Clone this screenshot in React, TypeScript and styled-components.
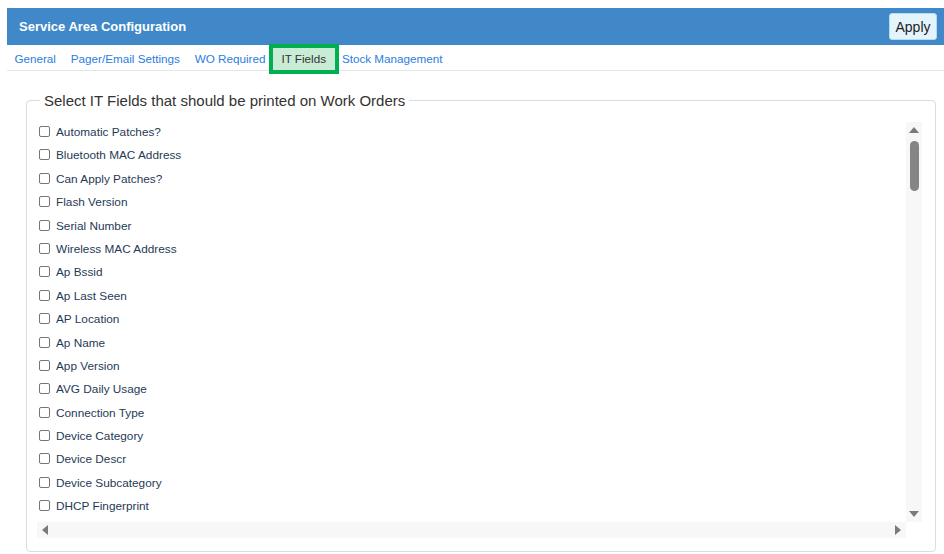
import React from "react";
import styled, { createGlobalStyle } from "styled-components";

const Global = createGlobalStyle`
  html, body { margin: 0; padding: 0; overflow: hidden; background: #fff; }
  body { font-family: "Liberation Sans", Arial, sans-serif; }
  * { box-sizing: border-box; }
`;

const Page = styled.div`
  padding: 8px 0 0 7px;
  width: 944px;
`;

const Header = styled.div`
  height: 37px;
  background: #4088c8;
  display: flex;
  align-items: center;
  justify-content: space-between;
  padding: 0 7px 0 12px;
`;

const Title = styled.div`
  color: #fff;
  font-weight: bold;
  font-size: 13px;
`;

const ApplyButton = styled.button`
  height: 27px;
  width: 48px;
  padding: 0;
  background: #e3f4fc;
  border: 1px solid #b6dbef;
  border-radius: 3px;
  font-family: "Liberation Sans", Arial, sans-serif;
  font-size: 14px;
  color: #222;
`;

const TabRow = styled.div`
  height: 26px;
  border-bottom: 1px solid #e4e6e9;
  display: flex;
  align-items: flex-start;
  padding-top: 3px;
`;

const Tab = styled.div<{ $active?: boolean }>`
  height: 22px;
  line-height: 22px;
  padding: 0 ${(p) => (p.$active ? "8.5px" : "7.4px")};
  font-size: 11.7px;
  color: ${(p) => (p.$active ? "#333" : "#2b7de1")};
  background: ${(p) => (p.$active ? "#c9ecd6" : "transparent")};
  outline: ${(p) => (p.$active ? "4px solid #00b050" : "none")};
  position: relative;
  z-index: ${(p) => (p.$active ? 1 : 0)};
`;

const Fieldset = styled.fieldset`
  margin: 21px 8px 0 19px;
  padding: 13px 13px 13px 10px;
  border: 1px solid #dcdcdc;
  border-radius: 4px;
  min-width: 0;
`;

const Legend = styled.legend`
  font-size: 15px;
  line-height: 17px;
  color: #333;
  padding: 0 4px;
  margin-left: 3px;
`;

const ScrollBox = styled.div`
  height: 416px;
  display: flex;
  flex-direction: column;
`;

const ScrollMain = styled.div`
  flex: 1;
  display: flex;
  min-height: 0;
`;

const List = styled.div`
  flex: 1;
  overflow: hidden;
`;

const Row = styled.label`
  height: 23.4px;
  display: flex;
  align-items: flex-start;
  gap: 6px;
  padding: 3px 0 0 2px;
  font-size: 11.8px;
  line-height: 14px;
  color: #1f3a56;
`;

const Check = styled.input.attrs({ type: "checkbox" })`
  appearance: none;
  -webkit-appearance: none;
  margin: 1px 0 0 0;
  width: 11px;
  height: 11px;
  border: 1px solid #767676;
  border-radius: 2px;
  background: #fff;
  flex: none;
`;

const VBar = styled.div`
  width: 16px;
  background: #f7f7f7;
  display: flex;
  flex-direction: column;
  align-items: center;
`;

const ArrowBtn = styled.div`
  width: 16px;
  height: 16px;
  display: flex;
  align-items: center;
  justify-content: center;
  flex: none;
`;

const VTrack = styled.div`
  flex: 1;
  width: 16px;
  padding: 3px 3px 0 4px;
`;

const Thumb = styled.div`
  width: 9px;
  height: 50px;
  border-radius: 5px;
  background: #858585;
`;

const HRow = styled.div`
  height: 16px;
  display: flex;
`;

const HBar = styled.div`
  flex: 1;
  background: #f7f7f7;
  display: flex;
  justify-content: space-between;
  align-items: center;
`;

const Corner = styled.div`
  width: 16px;
  background: #fff;
`;

const items = [
  "Automatic Patches?",
  "Bluetooth MAC Address",
  "Can Apply Patches?",
  "Flash Version",
  "Serial Number",
  "Wireless MAC Address",
  "Ap Bssid",
  "Ap Last Seen",
  "AP Location",
  "Ap Name",
  "App Version",
  "AVG Daily Usage",
  "Connection Type",
  "Device Category",
  "Device Descr",
  "Device Subcategory",
  "DHCP Fingerprint",
];

const Tri = ({ dir }: { dir: "up" | "down" | "left" | "right" }) => {
  const pts: Record<string, string> = {
    up: "0,7 5,1 10,7",
    down: "0,1 10,1 5,7",
    left: "7,0 7,10 1,5",
    right: "1,0 1,10 7,5",
  };
  const vertical = dir === "up" || dir === "down";
  return (
    <svg width={vertical ? 10 : 8} height={vertical ? 8 : 10} viewBox={vertical ? "0 0 10 8" : "0 0 8 10"}>
      <polygon points={pts[dir]} fill="#7a7a7a" />
    </svg>
  );
};

export default function App() {
  return (
    <>
      <Global />
      <Page>
        <Header>
          <Title>Service Area Configuration</Title>
          <ApplyButton>Apply</ApplyButton>
        </Header>
        <TabRow>
          <Tab>General</Tab>
          <Tab>Pager/Email Settings</Tab>
          <Tab>WO Required</Tab>
          <Tab $active>IT Fields</Tab>
          <Tab>Stock Management</Tab>
        </TabRow>
        <Fieldset>
          <Legend>Select IT Fields that should be printed on Work Orders</Legend>
          <ScrollBox>
            <ScrollMain>
              <List>
                {items.map((it) => (
                  <Row key={it}>
                    <Check />
                    <span>{it}</span>
                  </Row>
                ))}
              </List>
              <VBar>
                <ArrowBtn>
                  <Tri dir="up" />
                </ArrowBtn>
                <VTrack>
                  <Thumb />
                </VTrack>
                <ArrowBtn>
                  <Tri dir="down" />
                </ArrowBtn>
              </VBar>
            </ScrollMain>
            <HRow>
              <HBar>
                <ArrowBtn>
                  <Tri dir="left" />
                </ArrowBtn>
                <ArrowBtn>
                  <Tri dir="right" />
                </ArrowBtn>
              </HBar>
              <Corner />
            </HRow>
          </ScrollBox>
        </Fieldset>
      </Page>
    </>
  );
}
